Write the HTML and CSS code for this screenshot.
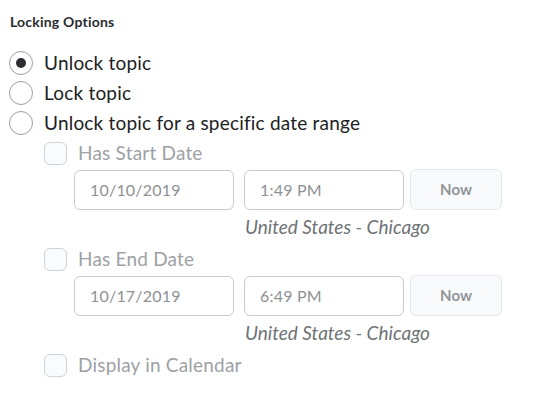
FILE: index.html
```html
<!DOCTYPE html>
<html>
<head>
<meta charset="utf-8">
<link rel="stylesheet" href="styles.css">
</head>
<body>
<div class="panel">
  <div class="title">Locking Options</div>
  <div class="options">
    <label class="row"><span class="radio checked"></span><span class="label">Unlock topic</span></label>
    <label class="row"><span class="radio"></span><span class="label">Lock topic</span></label>
    <label class="row"><span class="radio"></span><span class="label">Unlock topic for a specific date range</span></label>
    <div class="sub">
      <label class="row"><span class="check"></span><span class="label disabled">Has Start Date</span></label>
      <div class="dates">
        <div class="input">10/10/2019</div>
        <div class="tz-col">
          <div class="input">1:49 PM</div>
          <div class="tz">United States - Chicago</div>
        </div>
        <div class="btn">Now</div>
      </div>
      <label class="row"><span class="check"></span><span class="label disabled">Has End Date</span></label>
      <div class="dates">
        <div class="input">10/17/2019</div>
        <div class="tz-col">
          <div class="input">6:49 PM</div>
          <div class="tz">United States - Chicago</div>
        </div>
        <div class="btn">Now</div>
      </div>
      <label class="row"><span class="check"></span><span class="label disabled">Display in Calendar</span></label>
    </div>
  </div>
</div>
</body>
</html>
```
FILE: styles.css
```css
html, body {
  margin: 0;
  padding: 0;
  background: #ffffff;
}
body {
  font-family: Lato, "Noto Sans", sans-serif;
  color: #202122;
}
.panel {
  padding: 12px 0 0 9px;
}
.title {
  font-size: 14px;
  font-weight: 700;
  line-height: 20px;
  letter-spacing: 0.2px;
  color: #2a2c2e;
  padding-left: 1px;
}
.options {
  margin-top: 16px;
}
.row {
  display: flex;
  align-items: center;
  height: 30px;
  gap: 11px;
}
.label {
  font-size: 19px;
  letter-spacing: 0.2px;
  line-height: 30px;
  color: #202122;
}
.label.disabled {
  color: #9ea1a4;
}
.radio {
  box-sizing: border-box;
  width: 24px;
  height: 24px;
  border: 1px solid #999ea5;
  border-radius: 50%;
  background: #fff;
  display: flex;
  align-items: center;
  justify-content: center;
  flex: none;
}
.radio.checked::after {
  content: "";
  width: 10px;
  height: 10px;
  border-radius: 50%;
  background: #2b2d30;
}
.sub {
  margin-left: 35px;
}
.check {
  box-sizing: border-box;
  width: 23px;
  height: 23px;
  border: 1px solid #cdd3da;
  border-radius: 6px;
  background: #f9fbfd;
  flex: none;
}
.dates {
  display: flex;
  align-items: flex-start;
  margin: 2px 0 2px 30px;
}
.input {
  box-sizing: border-box;
  width: 160px;
  height: 40px;
  border: 1px solid #c7cbcf;
  border-radius: 6px;
  padding-left: 15px;
  font-size: 16px;
  letter-spacing: 0.2px;
  line-height: 38px;
  color: #8e9194;
}
.tz-col {
  width: 160px;
  margin-left: 10px;
}
.tz {
  font-size: 19px;
  font-style: italic;
  line-height: 30px;
  margin-top: 2px;
  color: #6e7376;
  padding-left: 1px;
  white-space: nowrap;
}
.btn {
  box-sizing: border-box;
  width: 92px;
  height: 41px;
  margin-left: 6px;
  margin-top: -1px;
  border: 1px solid #e3e8ee;
  border-radius: 6px;
  background: #f9fafb;
  text-align: center;
  font-size: 15px;
  font-weight: 700;
  line-height: 39px;
  color: #919498;
}
```
